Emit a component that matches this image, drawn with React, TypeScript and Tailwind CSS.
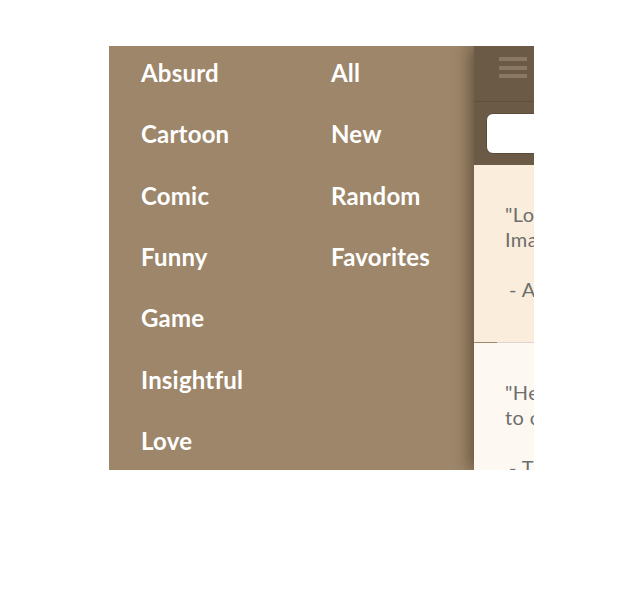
import React from "react";

const left = ["Absurd", "Cartoon", "Comic", "Funny", "Game", "Insightful", "Love"];
const right = ["All", "New", "Random", "Favorites"];

function Col({ items }: { items: string[] }) {
  return (
    <div className="flex w-[190px] shrink-0 flex-col">
      {items.map((t) => (
        <div key={t} className="h-[61.33px] shrink-0 text-[24px] font-bold leading-[28px] tracking-[0.2px] text-white">
          {t}
        </div>
      ))}
    </div>
  );
}

export default function App() {
  return (
    <div className="h-[600px] w-[640px] bg-white pl-[109px] pt-[46px]" style={{ fontFamily: "Lato, 'Open Sans', sans-serif" }}>
      <div className="flex h-[424px] w-[425px] overflow-hidden bg-[#9d8669]">
        <div className="flex w-[365px] shrink-0 pl-[32px] pt-[13px]">
          <Col items={left} />
          <Col items={right} />
        </div>
        <div className="relative flex w-[320px] shrink-0 flex-col shadow-[-5px_0_14px_rgba(40,28,15,0.45)]">
          <div className="flex h-[56px] shrink-0 border-b border-[#5f503d] bg-[#6b5a45] pl-[25px] pt-[11px]">
            <div className="flex flex-col gap-[4.5px]">
              <div className="h-[4px] w-[28px] bg-[#8a7862]" />
              <div className="h-[4px] w-[28px] bg-[#8a7862]" />
              <div className="h-[4px] w-[28px] bg-[#8a7862]" />
            </div>
          </div>
          <div className="shrink-0 bg-[#6b5a45] px-[12px] py-[11px]">
            <div className="h-[41px] rounded-[7px] border border-[#5a4b38] bg-white" />
          </div>
          <div className="shrink-0 bg-[#faeddb] pb-[40px] pl-[31px] pt-[37px] text-[20px] leading-[25px] tracking-[0.4px] text-[#6e6e6e]">
            <div className="whitespace-nowrap">"Logic will get you from A to B.</div>
            <div className="whitespace-nowrap">Imagination will take you everywhere."</div>
            <div className="h-[25px]" />
            <div className="whitespace-nowrap pl-[4px]">- Albert Einstein</div>
          </div>
          <div className="ml-[23px] h-px shrink-0 bg-[#dcd6ce]" />
          <div className="flex-1 bg-[#fdf8f2] pl-[31px] pt-[37px] text-[20px] leading-[25px] tracking-[0.4px] text-[#6e6e6e]">
            <div className="whitespace-nowrap">"He who is not courageous enough</div>
            <div className="whitespace-nowrap">to conquer fear will accomplish nothing."</div>
            <div className="h-[25px]" />
            <div className="whitespace-nowrap pl-[4px]">- The Greatest</div>
          </div>
        </div>
      </div>
    </div>
  );
}
